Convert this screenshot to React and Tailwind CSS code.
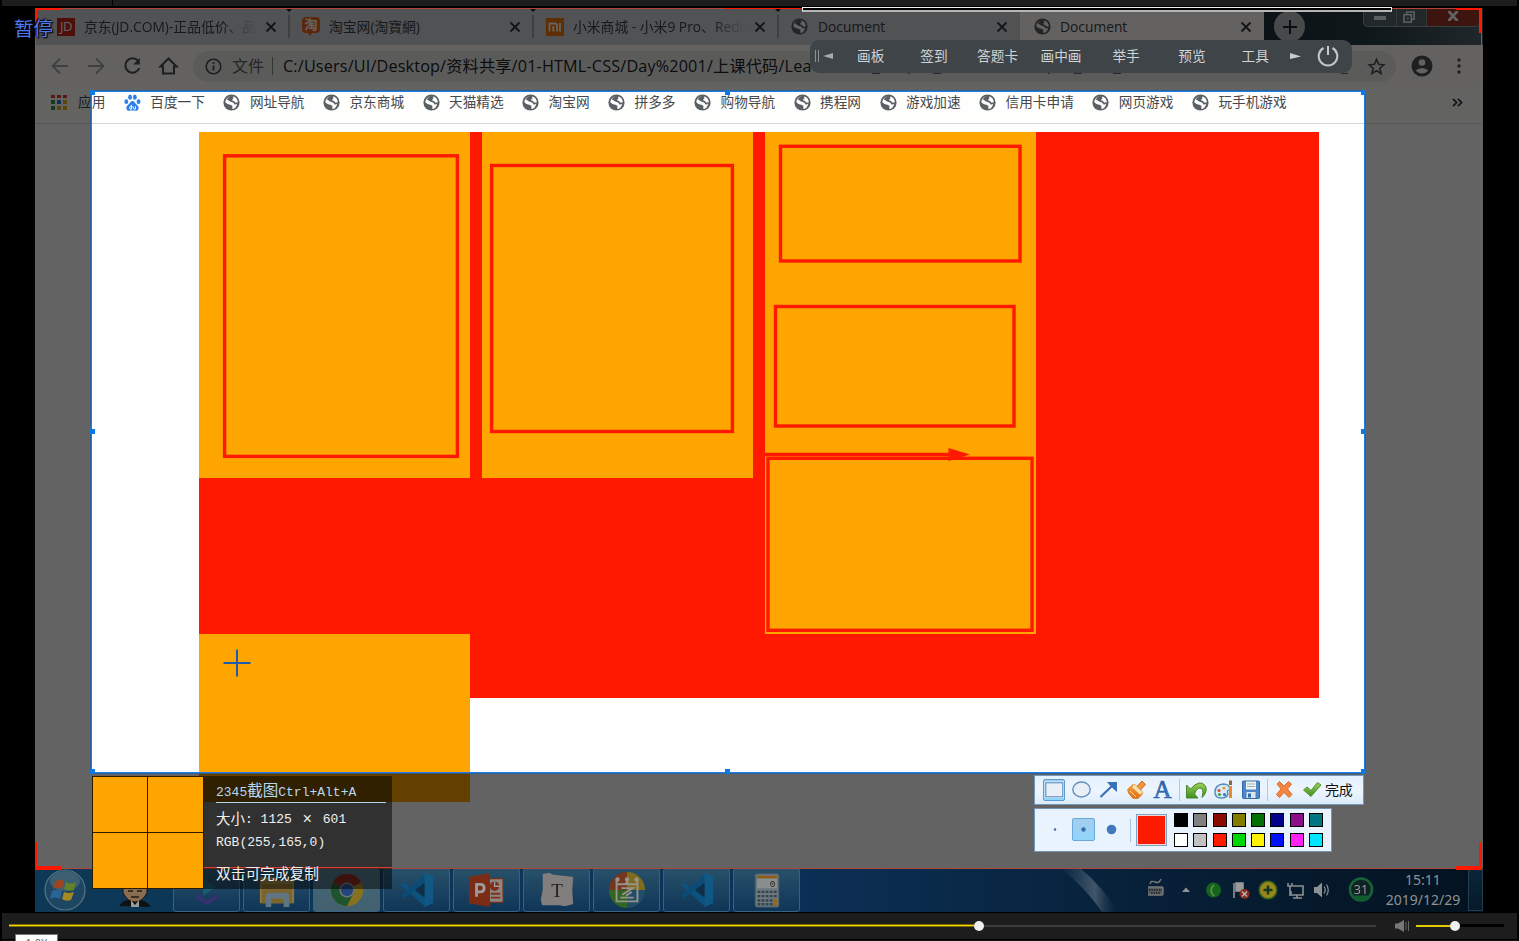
import React from "react";

const UI = "font-['Open_Sans','Noto_Sans_CJK_SC',sans-serif]";

function Globe({ className = "" }) {
  return (
    <svg viewBox="0 0 17 17" className={"h-[17px] w-[17px] shrink-0 " + className}>
      <circle cx="8.5" cy="8.5" r="8.1" fill="#5a6063" />
      <path d="M8 2.2C10.5 2 11 3.4 9.2 4.3C7.6 5 7.8 6.3 9.3 6.6C11.4 7 11.6 8.4 13 8.2C14.4 8 14.8 7.6 15 8.6C14.9 11.6 12.6 14.6 9.8 15C8.6 14.8 9.9 12.7 9.2 11.6C8.3 10.6 4.7 10.9 2.2 7.9C2.7 4.7 5.2 2.5 8 2.2Z" fill="#fefefe" />
      <path d="M3.8 5.7C5.6 5.9 6.1 7 7.8 7.8C10.4 8.5 11.2 9.4 11.5 10.6C13.2 10.6 13.8 9.8 14.4 9.4C13.9 12 12.2 14 10.5 14.6L15 12L15.6 6.5L12 2.5L8.6 1.8C6 2 5 3.6 3.8 5.7Z" fill="#5a6063" />
      <path d="M9.6 3.2C11.8 4.2 9.3 5.1 9 5.9C9.2 6.6 11.7 6.6 11.8 8.2C13 9 14 8 14.9 8.3C14.6 6 13.5 3.6 10.6 2.6Z" fill="#fefefe" />
    </svg>
  );
}

function Close() {
  return (
    <svg viewBox="0 0 12 12" className="h-3 w-3 shrink-0">
      <path d="M1.5 1.5L10.5 10.5M10.5 1.5L1.5 10.5" stroke="#33363a" strokeWidth="1.9" />
    </svg>
  );
}

function Tab({ icon, title, width, active, fade, sep }) {
  return (
    <div className={"relative flex h-full items-center pl-[13px] pr-3 " + width + (active ? " bg-[#fefdf8]" : "")}>
      <div className="flex w-[18px] shrink-0">{icon}</div>
      <div className={"ml-[9px] flex-1 overflow-hidden whitespace-nowrap text-[13.8px] leading-5 text-[#3c4043] " + (fade ? "mask-r-from-80%" : "")}>{title}</div>
      <div className="ml-2"><Close /></div>
      {sep && (
        <svg viewBox="0 0 8 38" className="absolute -right-1 top-0 z-10 h-[38px] w-2">
          <path d="M0 0H8L4 4Z" fill="#1b2226" />
          <path d="M4 7V30" stroke="#6e7478" />
        </svg>
      )}
    </div>
  );
}

function Baidu() {
  return (
    <svg viewBox="0 0 16 16" className="h-[17px] w-[17px] shrink-0" fill="#2f7fe8">
      <ellipse cx="2.2" cy="7.2" rx="1.8" ry="2.3" />
      <ellipse cx="5.7" cy="3" rx="1.8" ry="2.5" />
      <ellipse cx="10.2" cy="3" rx="1.8" ry="2.5" />
      <ellipse cx="13.7" cy="7.2" rx="1.8" ry="2.3" />
      <path d="M8 6.5C10 6.5 10.5 9 12.5 10.5C15 12.5 13.5 16 11 15.7C9 15.4 7 15.4 5 15.7C2.5 16 1 12.5 3.5 10.5C5.5 9 6 6.5 8 6.5Z" />
      <path d="M7 10.2V14.3H5.8Q4.7 13 5.8 11.8H7M8.6 11.6V13.6Q9 14.4 10.8 14.2V11.6" fill="none" stroke="#fff" strokeWidth=".9" />
    </svg>
  );
}

const appColors = ["bg-[#d8402f]", "bg-[#d8402f]", "bg-[#d8402f]", "bg-[#2f9a50]", "bg-[#3474e0]", "bg-[#e5b020]", "bg-[#2f9a50]", "bg-[#e5b020]", "bg-[#e5b020]"];
const bookmarks = ["网址导航", "京东商城", "天猫精选", "淘宝网", "拼多多", "购物导航", "携程网", "游戏加速", "信用卡申请", "网页游戏", "玩手机游戏"];

function TabStrip() {
  return (
    <div className="flex h-[37px] bg-[#cfd4d6]">
      <Tab sep fade width="ml-[9px] w-[245px]" title="京东(JD.COM)-正品低价、品质"
        icon={<span className="flex h-[18px] w-[18px] items-center justify-center bg-[#c8271d] text-[13px] tracking-[-0.5px] text-white">JD</span>} />
      <Tab sep width="w-[244px]" title="淘宝网(淘寶網)"
        icon={
          <span className="relative mb-[3px] flex h-[16px] w-[18px] items-center justify-center rounded-[4px] bg-[#f0641e] text-[13px] font-bold text-white">
            淘
            <span className="absolute -bottom-[3px] left-[5px] border-x-[3px] border-t-[4px] border-x-transparent border-t-[#f0641e]" />
          </span>
        } />
      <Tab sep fade width="w-[245px]" title="小米商城 - 小米9 Pro、Redmi"
        icon={
          <svg viewBox="0 0 18 18" className="h-[18px] w-[18px]">
            <rect width="18" height="18" fill="#f47a08" />
            <path d="M3.5 13.5V5.5H9Q11 5.5 11 7.5V13.5M7.3 8V13.5M14 5V13.5" fill="none" stroke="#fff" strokeWidth="1.8" />
          </svg>
        } />
      <Tab width="w-[242px]" title="Document" icon={<Globe />} />
      <Tab active width="w-[244px]" title="Document" icon={<Globe className="ml-px" />} />
      <div className="flex flex-1 items-start justify-between bg-linear-to-r from-[#1c3038] via-[#283e48] to-[#52666e]">
        <div className="ml-[10px] mt-[3px] flex h-[31px] w-[31px] items-center justify-center rounded-full bg-[#b8bdbf]">
          <svg viewBox="0 0 14 14" className="h-[14px] w-[14px]"><path d="M7 0V14M0 7H14" stroke="#1d2226" strokeWidth="2" /></svg>
        </div>
        <div className="mr-[3px] flex h-[19px] w-[117px] overflow-hidden rounded-b-[5px] border border-t-0 border-[#9aa2a6] bg-[#59666c]">
          <div className="flex w-[33px] items-center justify-center border-r border-[#8a9094]"><span className="mt-0.5 h-[4px] w-[12px] bg-[#f0f2f2]" /></div>
          <div className="flex w-[30px] items-center justify-center border-r border-[#8a9094]">
            <svg viewBox="0 0 13 13" className="-ml-1.5 h-[12px] w-[12px]" fill="none" stroke="#f0f2f2" strokeWidth="1.7"><rect x="1" y="4" width="8" height="8" /><path d="M4 4V1H12V9H9M4.5 8H6" /></svg>
          </div>
          <div className="flex flex-1 items-center justify-center bg-[#9c3826]">
            <svg viewBox="0 0 12 10" className="-mt-0.5 h-[10px] w-[12px]"><path d="M1.5 0L10.5 10M10.5 0L1.5 10" stroke="#fafafa" strokeWidth="2.8" /></svg>
          </div>
        </div>
      </div>
    </div>
  );
}

function AddressBar() {
  return (
    <div className="flex h-[42px] items-center bg-[#fefdf8] pl-[15px]">
      <svg viewBox="0 0 130 24" className="h-6 w-[130px] shrink-0" fill="none" stroke="#4c5054" strokeWidth="2.1">
        <g stroke="#a2a4a4" strokeWidth="1.8"><path d="M18 12H3M10 4.500L2.500 12L10 19.500" /><path d="M38 12H53M46 4.500L53.500 12L46 19.500" /></g>
        <path d="M88 6.800A7.200 7.200 0 1 0 89.300 14" />
        <path d="M89.800 4V10.500H83.200Z" fill="#4c5054" stroke="none" />
        <path d="M113 19.500V12.500H110.500L118.500 4.500L126.500 12.500H124V19.500Z" />
      </svg>
      <div className="ml-[13px] flex h-[31px] w-[1203px] items-center rounded-full bg-[#ebede8] pl-[12px] pr-[10px]">
        <svg viewBox="0 0 17 17" className="h-[17px] w-[17px] shrink-0" fill="none" stroke="#4c5054" strokeWidth="1.6"><circle cx="8.500" cy="8.500" r="7.300" /><path d="M8.500 7.500V12.500M8.500 4.300V6" strokeWidth="1.900" /></svg>
        <span className="ml-[10px] w-[32px] whitespace-nowrap text-[16px] leading-6 text-[#5f6368]">文件</span>
        <span className="ml-2 h-[18px] w-px bg-[#85898b]" />
        <span className="ml-[10px] flex-1 overflow-hidden whitespace-nowrap text-[16.2px] leading-6 tracking-[0.165px] text-[#202124]">C:/Users/UI/Desktop/资料共享/01-HTML-CSS/Day%2001/上课代码/Lea</span>
        <svg viewBox="0 0 24 24" className="h-[19px] w-[19px] shrink-0" fill="none" stroke="#4c5054" strokeWidth="2"><path d="M12 3L14.600 9.200L21.300 9.800L16.200 14.200L17.800 20.800L12 17.300L6.200 20.800L7.800 14.200L2.700 9.800L9.400 9.200Z" /></svg>
      </div>
      <svg viewBox="0 0 22 22" className="ml-[15px] h-[22px] w-[22px] shrink-0"><circle cx="11" cy="11" r="10.500" fill="#4c5054" /><circle cx="11" cy="7.500" r="3.300" fill="#fefdf8" /><path d="M4.500 15.500Q11 10.500 17.500 15.500Q11 21.500 4.500 15.500Z" fill="#fefdf8" /></svg>
      <svg viewBox="0 0 4 16" className="ml-[24px] h-4 w-1" fill="#4c5054"><circle cx="2" cy="2" r="1.700" /><circle cx="2" cy="8" r="1.700" /><circle cx="2" cy="14" r="1.700" /></svg>
    </div>
  );
}

function Bookmarks() {
  return (
    <div className="flex h-[37px] items-center gap-[18.5px] border-b border-[#d9dadb] bg-[#fefefd] pb-[6px] pl-[16px] text-[13.65px] leading-5 text-[#45494d]">
      <div className="flex items-center gap-[10px] whitespace-nowrap">
        <div className="grid h-[15px] w-[17px] grid-cols-3 gap-x-[2.500px] gap-y-[2px] pr-[1px]">{appColors.map((c, i) => <span key={i} className={c} />)}</div>应用
      </div>
      <div className="flex items-center gap-[9.500px] whitespace-nowrap"><Baidu />百度一下</div>
      {bookmarks.map((b) => <div key={b} className="flex items-center gap-[9.500px] whitespace-nowrap"><Globe />{b}</div>)}
      <svg viewBox="0 0 12 10" className="ml-auto mr-[20px] h-[9px] w-[11px]" fill="none" stroke="#303438" strokeWidth="1.900"><path d="M1 1L5 5L1 9M6.500 1L10.500 5L6.500 9" /></svg>
    </div>
  );
}

function PageContent() {
  return (
    <div className="flex-1 bg-[#fefefe] pl-[164px] pt-[8px]">
      <div className="flex h-[566px] w-[1120px] gap-[12px] bg-[#ff1900]">
        <div className="flex w-[271px] shrink-0 flex-col gap-[156px]">
          <div className="h-[346px] shrink-0 bg-[#ffa500]" />
          <div className="h-[168px] shrink-0 bg-[#ffa500]" />
        </div>
        <div className="h-[346px] w-[271px] shrink-0 bg-[#ffa500]" />
        <div className="h-[502px] w-[271px] shrink-0 bg-[#ffa500]" />
      </div>
    </div>
  );
}

function Annotations() {
  return (
    <svg viewBox="0 0 1272 680" className="absolute left-[57px] top-[84px] h-[680px] w-[1272px]" fill="none" stroke="#ff1900" strokeWidth="3.400">
      <g transform="translate(-92 -92)">
        <rect x="224.600" y="155.800" width="232.800" height="300.600" />
        <rect x="491.600" y="165.500" width="240.800" height="266" />
        <rect x="780.500" y="146.300" width="239.500" height="114.700" />
        <rect x="775.500" y="306.500" width="238.500" height="119.500" />
        <rect x="768" y="458.300" width="264" height="172" />
        <path d="M764 454.500H950" />
        <path d="M948.500 448L970 454.500L948.500 461Z" fill="#ff1900" stroke="none" />
        <path d="M237 649.500V676.500M223.500 663H250.500" stroke="#1f5bb0" strokeWidth="2" />
      </g>
    </svg>
  );
}

function Selection() {
  const h = "absolute h-[5px] w-[5px] bg-[#0a78e6] ";
  return (
    <div className="absolute left-[56px] top-[83px] h-[682px] w-[1274px] border-[1px] border-[#1f7fe6] shadow-[0_0_0_1px_rgba(30,95,170,0.75),0_0_0_2000px_rgba(0,0,0,0.61)]">
      <span className={h + "-left-[2px] -top-[2px]"} /><span className={h + "left-[633px] -top-[2px]"} /><span className={h + "-right-[2px] -top-[2px]"} />
      <span className={h + "-left-[2px] top-[337px]"} /><span className={h + "-right-[2px] top-[337px]"} />
      <span className={h + "-bottom-[2px] -left-[2px]"} /><span className={h + "-bottom-[2px] left-[633px]"} /><span className={h + "-bottom-[2px] -right-[2px]"} />
    </div>
  );
}

function VSCode() {
  return (
    <svg viewBox="0 0 40 40" className="h-[38px] w-[38px] opacity-85">
      <path d="M3 15L6 12L32 31L29 38Z" fill="#1283cc" /><path d="M3 26L6 29L32 10L29 2Z" fill="#0e76bd" /><path d="M28 2L37 6V34L28 38V28L18 20L28 12Z" fill="#168fd8" /><path d="M28 12V28L18 20Z" fill="#134466" />
    </svg>
  );
}

const taskIcons = [
  <svg viewBox="0 0 40 40" className="h-[38px] w-[38px]"><path d="M16 8L29 17L16 26Z" fill="#2a8fae" /><path d="M9 24L20 32L31 24V29L20 36L9 29Z" fill="#5a49ac" /></svg>,
  <svg viewBox="0 0 40 40" className="h-[38px] w-[38px]"><path d="M2 6H17L20 10H38V34H2Z" fill="#d6b75c" /><path d="M4 14H36V34H4Z" fill="#bf9a46" /><path d="M8 38V27Q8 23 12 23H29Q33 23 33 27V38H27V29H14V38Z" fill="#93b4c8" /></svg>,
  <svg viewBox="0 0 40 40" className="h-[38px] w-[38px]"><circle cx="20" cy="20" r="17" fill="#cfae30" /><path d="M20 20L5 12A17 17 0 0 1 35 12Z" fill="#b9392e" /><path d="M5 12A17 17 0 0 0 20 37L27 23Z" fill="#2f8045" /><circle cx="20" cy="20" r="8" fill="#a9b4b8" /><circle cx="20" cy="20" r="6.400" fill="#3569bf" /></svg>,
  <VSCode />,
  <svg viewBox="0 0 40 40" className="h-[38px] w-[38px]"><path d="M22 8H37V33H22Z" fill="#d8d0cc" stroke="#b84428" strokeWidth="1.500" /><circle cx="28" cy="16" r="5" fill="#c84826" /><path d="M28 11V16H34" stroke="#eee" fill="none" strokeWidth="1.500" /><path d="M24 24H34M24 28H34" stroke="#c84826" strokeWidth="2" /><path d="M1 6L23 2V38L1 34Z" fill="#bf4221" /><path d="M9 27V14H13Q17 14 17 18Q17 22 13 22H9" fill="none" stroke="#eee" strokeWidth="3" /></svg>,
  <svg viewBox="0 0 40 40" className="h-[38px] w-[38px]"><path d="M6 4L12 3L16 5L36 7L35 20L36 34L29 36L22 35L5 35L4 30L6 20Z" fill="#c6c3c1" stroke="#c6c3c1" strokeWidth="2" strokeLinejoin="round" /><text x="20" y="27" textAnchor="middle" fontFamily="Liberation Serif, serif" fontSize="20" fill="#333">T</text></svg>,
  <svg viewBox="0 0 40 40" className="h-[38px] w-[38px]"><path d="M20 20V1A19 19 0 0 0 1 20Z" fill="#b4532c" /><path d="M20 20V1A19 19 0 0 1 39 20Z" fill="#c9a52b" /><path d="M20 20H39A19 19 0 0 1 20 39Z" fill="#31769f" /><path d="M20 20H1A19 19 0 0 0 20 39Z" fill="#4d9c35" /><g fill="none" stroke="#e4e4d8" strokeWidth="2"><path d="M9 9V32H31V9M9 14H31" /><path d="M14 18H26L15 25M25 22L19 26M13 28H27" /></g><g fill="#e4e4d8"><circle cx="10" cy="9" r="2.300" /><circle cx="20" cy="9" r="2.300" /><circle cx="30" cy="9" r="2.300" /><path d="M17 14L20 10L23 14Z" /></g></svg>,
  <VSCode />,
  <svg viewBox="0 0 40 40" className="h-[38px] w-[38px]"><rect x="7.500" y="3" width="25" height="35" rx="2" fill="#a9bac4" stroke="#6d8797" /><rect x="9.500" y="5" width="21" height="3" fill="#d98f25" /><rect x="9.500" y="8" width="21" height="10" fill="#d5dadb" /><text x="23" y="17" fontSize="10" fontFamily="Liberation Mono, monospace" fill="#333">0</text><path d="M10 22H31M10 26.500H31M10 31H31M10 35H31" stroke="#50697a" strokeWidth="2.500" strokeDasharray="3 1.300" /><rect x="27" y="29.500" width="3.500" height="7" fill="#dda135" /></svg>,
];

function Taskbar() {
  return (
    <div className="absolute left-0 top-[860px] flex h-[44px] w-full items-center overflow-hidden bg-linear-to-r from-[#0d3856] via-[#0c3259] to-[#04121f]">
      <svg viewBox="0 0 138 44" className="h-11 w-[138px] shrink-0 brightness-[.7]">
        <circle cx="30" cy="22" r="20" fill="#28648c" stroke="#7ea6bb" strokeWidth="1.200" />
        <ellipse cx="30" cy="13" rx="15" ry="10" fill="#7fa2b5" opacity=".55" />
        <path d="M20 14Q25 10 29 13L27 21Q23 18 18 21Z" fill="#e0622c" /><path d="M31 14Q36 17 41 14L39 22Q34 24 29 21Z" fill="#8cb83a" />
        <path d="M17 23Q22 20 27 23L25 31Q20 28 15 31Z" fill="#3c8fd4" /><path d="M29 24Q34 26 39 24L36 32Q31 34 27 31Z" fill="#ecc334" />
        <g transform="translate(6 0)"><path d="M78 38Q82 32 88 32H99Q105 32 110 39Z" fill="#15171a" /><path d="M82 14H106V25Q101 34 94 34Q87 34 82 25Z" fill="#c49c74" stroke="#241a14" /><path d="M90 32L94 37L98 32V39H90Z" fill="#ddd" /><path d="M87 23H92M96 23H101M90 29H98" stroke="#33251a" strokeWidth="1.300" /></g>
      </svg>
      <div className="flex gap-[3px]">
        {taskIcons.map((icon, i) => (
          <div key={i} className={"flex h-[44px] w-[67px] items-center justify-center rounded-[3px] border border-[#38627f] " + (i === 2 ? "bg-linear-to-b from-[#476877] to-[#42606f]" : "bg-linear-to-b from-[#28516a] to-[#0f3557]")}>
            <div className="brightness-[.65]">{icon}</div>
          </div>
        ))}
      </div>
      <svg viewBox="0 0 90 44" className="ml-[258px] h-11 w-[90px] shrink-0">
        <defs><linearGradient id="streak"><stop offset="0" stopColor="#375066" stopOpacity="0" /><stop offset=".6" stopColor="#41566a" /><stop offset="1" stopColor="#1c3143" stopOpacity="0" /></linearGradient></defs>
        <path d="M2 0H22Q46 20 60 44H44Q26 18 2 0Z" fill="url(#streak)" />
      </svg>
      <svg viewBox="0 0 240 44" className="h-11 w-[240px] shrink-0 brightness-[.72]">
        <g fill="none" stroke="#a3a5a6" strokeWidth="1.400"><rect x="-1" y="19" width="16" height="8" rx="1" fill="#7e8284" /><path d="M2 16Q3 12 7 14T13 11" /><path d="M1 22H14M3 25H12" stroke="#20282e" strokeDasharray="1.500 1" /></g>
        <path d="M34 24L38 19.500L42 24Z" fill="#c8ccce" />
        <circle cx="65.500" cy="22" r="7.500" fill="#1d8a28" /><path d="M66 17Q60 22 66 28" stroke="#75c455" strokeWidth="2" fill="none" />
        <path d="M86 15V30M88 15H95V23H88Z" fill="#d6d6d6" stroke="#d6d6d6" strokeWidth="1.500" /><circle cx="96.500" cy="26" r="5" fill="#bd3b2d" /><path d="M94 23.500L99 28.500M99 23.500L94 28.500" stroke="#fff" strokeWidth="1.400" />
        <circle cx="120" cy="22" r="8.700" fill="#d6bc26" stroke="#4c8c2d" strokeWidth="1.500" /><path d="M120 17.500V26.500M115.500 22H124.500" stroke="#1d4c28" strokeWidth="2.500" />
        <g fill="none" stroke="#c2c8cb" strokeWidth="1.600"><path d="M145 18H155V27H143V23M149 30V27M145 30H154" /><path d="M140 15V18H144V15M142 18V28" /></g>
        <path d="M166 19H169L174 14.500V29.500L169 25H166Z" fill="#c5cacd" /><path d="M176 18.500Q178.500 22 176 25.500M178.500 16.500Q182 22 178.500 27.500" fill="none" stroke="#c5cacd" strokeWidth="1.200" />
        <circle cx="213" cy="21.500" r="11" fill="#153035" stroke="#23894e" strokeWidth="2.500" /><path d="M203.500 27.500H222.500Q219 33 213 33Q207 33 203.500 27.500Z" fill="#158044" /><text x="213" y="26" textAnchor="middle" fill="#d8dcdc" fontFamily="Open Sans, sans-serif" fontSize="12.500">31</text>
      </svg>
      <div className="absolute right-[17px] top-[2px] w-[86px] text-center font-['Noto_Sans',sans-serif] text-[14px] leading-[20px] text-[#8f9294]">15:11<br />2019/12/29</div>
      <div className="absolute right-0 top-0 h-[43px] w-[15px] border border-[#253f50] bg-linear-to-b from-[#0a2737] to-[#06192a]" />
    </div>
  );
}

function RecordingFrame() {
  const c = "absolute bg-[#ff1800] ";
  return (
    <div className="absolute left-0 top-0 h-[861px] w-[1447px] border border-[#b3443b]">
      <span className={c + "-left-px -top-px h-[2px] w-[26px]"} /><span className={c + "-left-px -top-px h-[28px] w-[2px]"} />
      <span className={c + "-right-px -top-px h-[2px] w-[26px]"} /><span className={c + "-right-px -top-px h-[25px] w-[3px]"} />
      <span className={c + "-left-px -bottom-[2px] h-[4px] w-[26px]"} /><span className={c + "-left-px -bottom-[2px] h-[28px] w-[2px]"} />
      <span className={c + "-right-px -bottom-[2px] h-[4px] w-[26px]"} /><span className={c + "-right-px -bottom-[2px] h-[28px] w-[3px]"} />
      <span className={c + "-top-px left-[688px] h-px w-[78px]"} />
    </div>
  );
}

const classTools = [["画板", "ml-[24px]"], ["签到", "ml-[36px]"], ["答题卡", "ml-[29.500px]"], ["画中画", "ml-[22.500px]"], ["举手", "ml-[31px]"], ["预览", "ml-[38.500px]"], ["工具", "ml-[36px]"]];

function ClassToolbar() {
  return (
    <div className="absolute left-[775px] top-[32px]">
      <div className="flex h-[33px] w-[542px] items-center rounded-[9px] bg-[#3f4448] pb-px pl-[5px] text-[13.650px] leading-5 text-[#d0d4d6]">
        <svg viewBox="0 0 18 12" className="h-3 w-[18px]"><path d="M.500 0V12M3.500 0V12" stroke="#8d9194" /><path d="M8 6L18 3V9Z" fill="#a5a9ac" /></svg>
        {classTools.map(([t, m]) => <span key={t} className={"whitespace-nowrap " + m}>{t}</span>)}
        <svg viewBox="0 0 11 6" className="ml-[21px] h-1.5 w-[11px]"><path d="M0 0L11 3.500L0 6Z" fill="#c8cccf" /></svg>
        <svg viewBox="0 0 22 22" className="ml-[16px] h-[22px] w-[22px]" fill="none" stroke="#c2c6c9" strokeWidth="2.100"><path d="M11 1V10M6.500 3A9.300 9.300 0 1 0 15.500 3" /></svg>
      </div>
      <svg viewBox="0 0 542 2" className="-mt-[0.5px] h-0.5 w-[542px]"><path d="M62 .5H70M98 .5H100M123 .5H131M238 .5H240M264 .5H272M303 .5H311M531 .5H538" stroke="#26282a" /></svg>
    </div>
  );
}

const swatches = ["bg-black", "bg-[#808080]", "bg-[#8b0a00]", "bg-[#827c00]", "bg-[#007000]", "bg-[#00008a]", "bg-[#8a0f88]", "bg-[#007582]", "bg-white", "bg-[#c0c0c0]", "bg-[#ff1a00]", "bg-[#00d600]", "bg-[#fff200]", "bg-[#0010ff]", "bg-[#ff20f5]", "bg-[#00e5ff]"];

function SnipTools() {
  return (
    <div className="absolute left-[999px] top-[767px] flex flex-col items-start gap-[3px]">
      <div className="flex h-[30px] w-[330px] items-center border border-[#7396ba] bg-linear-to-b from-[#e3f1fd] via-[#edf5fe] to-[#dcecfb]">
        <svg viewBox="0 0 290 28" className="h-7 w-[290px] shrink-0" fill="none">
          <defs>
            <linearGradient id="sel" x2="0" y2="1"><stop stopColor="#a5cdee" /><stop offset="1" stopColor="#8fd5fa" /></linearGradient>
            <linearGradient id="grn" x2="0" y2="1"><stop stopColor="#9bd34e" /><stop offset="1" stopColor="#3d8e22" /></linearGradient>
            <linearGradient id="org" x2="0" y2="1"><stop stopColor="#f7a13c" /><stop offset="1" stopColor="#e06c14" /></linearGradient>
            <linearGradient id="blu" x2="0" y2="1"><stop stopColor="#26548f" /><stop offset="1" stopColor="#4485d6" /></linearGradient>
          </defs>
          <rect x="8.500" y="3.500" width="21" height="21" rx="1.500" fill="url(#sel)" stroke="#5b9ccd" />
          <rect x="10.800" y="6.800" width="17" height="14" fill="#e9eff6" stroke="#f8fbff" strokeWidth="2.400" />
          <rect x="10.800" y="6.800" width="17" height="14" stroke="#5c8dc0" strokeWidth="1.200" />
          <ellipse cx="46.500" cy="13.500" rx="8.700" ry="7.500" fill="#e8eff7" stroke="#638fbd" strokeWidth="1.400" />
          <path d="M65.500 21L78 9" stroke="#3973b4" strokeWidth="2.200" /><path d="M72 6H82V16L79 13.500L74.500 9Z" fill="#3973b4" />
          <path d="M107 5L110.500 8.500L105 14.500L101.500 11Z" fill="#f0953a" stroke="#ca6a14" />
          <path d="M98 8.500L107.500 18L103 22.500H98L93.500 17L92.500 13.500Z" fill="url(#org)" stroke="#d9771c" strokeWidth=".8" />
          <path d="M99.500 8L108 16.500L105 19L96.500 11Z" fill="#fbe0ad" stroke="#d98a34" strokeWidth=".7" /><path d="M95 15L101 21" stroke="#ffdca2" />
          <text x="127.500" y="21.500" textAnchor="middle" fontFamily="Liberation Serif, serif" fontSize="25" fill="url(#blu)" stroke="#2d63a8" strokeWidth=".7">A</text>
          <path d="M144.500 3V25M232.500 3V25" stroke="#a9cbe6" />
          <path d="M151.500 9V22H163L159.500 18Q162 10.500 167 12.500Q169 15 167 21.500Q173 16 170.500 10Q165 2.500 155.500 13Z" fill="url(#grn)" stroke="#48862b" />
          <path d="M180 16Q180 9 188 8Q195 8 195 14Q191 14 193 18Q192 22 186 22Q180 22 180 16Z" fill="#dcebf7" stroke="#568fbd" strokeWidth="1.500" /><circle cx="184" cy="14.500" r="1.600" fill="#d64d3c" /><circle cx="189" cy="12" r="1.600" fill="#d6a32a" /><circle cx="184.500" cy="18.500" r="1.600" fill="#48a340" /><circle cx="189.500" cy="18.500" r="1.600" fill="#3e73c6" />
          <path d="M195.500 22V10" stroke="#e88c2c" strokeWidth="3" /><path d="M195.500 9V4.500" stroke="#90653e" strokeWidth="3" />
          <rect x="207.500" y="5" width="17" height="17.500" rx="1" fill="#4c85c8" stroke="#346aa9" /><rect x="211" y="5.500" width="10" height="8" fill="#f2f4f2" /><path d="M212 8H220M212 10.500H220" stroke="#9aafba" /><rect x="211.500" y="16" width="9" height="6" fill="#dbe6ef" /><rect x="213" y="17.500" width="3" height="4" fill="#356aae" />
          <path d="M242 8L244.500 5.500L249 10L253.500 5.500L256.500 8L252.500 13L257 18.500L254 21.500L249 16.500L244.500 21.500L241.500 18.500L246 13Z" fill="#f58640" stroke="#d86d31" />
          <path d="M268.500 14L272 11L276 14.500L282.500 6.500L286 9L276 20.500Z" fill="url(#grn)" stroke="#549332" />
        </svg>
        <span className="whitespace-nowrap text-[14px] leading-5 tracking-[-0.3px] text-[#111]">完成</span>
      </div>
      <div className="flex h-[44px] w-[298px] items-center border border-[#7396ba] bg-[#e9f3fd]">
        <svg viewBox="0 0 102 42" className="h-[42px] w-[102px] shrink-0"><circle cx="20" cy="20.500" r="1.200" fill="#39679e" /><rect x="37.500" y="9.500" width="22" height="22" rx="1.500" fill="url(#sel)" stroke="#69aad8" /><circle cx="48.500" cy="20.500" r="2.200" fill="#346fac" /><circle cx="76.500" cy="20.500" r="4.800" fill="#4279be" /><path d="M95.500 10V33" stroke="#a3c6e3" /></svg>
        <span className="-ml-px h-[32px] w-[31px] shrink-0 border border-[#7da4c7] bg-[#fc1a00] ring-1 ring-inset ring-[#f7d5d0]" />
        <div className="ml-[7px] grid grid-cols-8 gap-x-[5.250px] gap-y-[5.500px]">
          {swatches.map((s) => <span key={s} className={"h-[14px] w-[14px] border border-black " + s} />)}
        </div>
      </div>
    </div>
  );
}

function InfoPanel() {
  const mono = "font-['Liberation_Mono','Noto_Sans_CJK_SC',monospace] text-[13px]";
  return (
    <div className="absolute left-[57px] top-[768px] flex h-[113px] w-[300px]">
      <div className="grid h-[113px] w-[112px] shrink-0 grid-cols-[54px_55px] grid-rows-2 gap-px border border-[#2b1a00] bg-[#2b1a00]">
        <span className="bg-[#ffa500]" /><span className="bg-[#ffa500]" /><span className="bg-[#ffa500]" /><span className="bg-[#ffa500]" />
      </div>
      <div className="relative flex-1 bg-black/50 pl-[12px] pr-[6px] pt-[6px] text-[#efefef]">
        <span className="absolute left-0 top-[91px] h-px w-full bg-[#d8412e]" />
        <div className={"h-[21px] whitespace-nowrap border-b border-[#b5d5ea] leading-[20px] text-[#b5d9f2] " + mono}>2345<span className="text-[15.500px]">截图</span>Ctrl+Alt+A</div>
        <div className={"mt-[6px] flex h-[22px] whitespace-pre leading-[22px] " + mono}><span className="text-[14.500px]">大小</span>: 1125<span className="mx-[7.5px] w-[16px] text-center text-[16px]">×</span>601</div>
        <div className={"h-[23px] leading-[24px] " + mono}>RGB(255,165,0)</div>
        <div className="relative mt-[9px] whitespace-nowrap text-[14.700px] leading-[20px]">双击可完成复制</div>
      </div>
    </div>
  );
}

function Player() {
  return (
    <div className="mx-[2px] flex h-[29px] flex-col overflow-hidden border-t border-black bg-[#1d1d1d]">
      <div className="flex h-[25px] items-center pl-[7px]">
        <span className="h-[3px] w-[965px] border-y border-[#7a6a00] bg-[#f2d900]" />
        <span className="h-[10px] w-[10px] rounded-full bg-[#efefef]" />
        <span className="h-[2px] w-[392px] bg-[#3d3d3d]" />
        <svg viewBox="0 0 15 12" className="ml-[19px] h-3 w-[15px]"><path d="M0 3.500H3L9 0V12L3 8.500H0Z" fill="#777" /><path d="M11 2V10M13.500 1V11" stroke="#666" /></svg>
        <span className="ml-[6px] h-[2px] w-[34px] bg-[#e3cb00]" />
        <span className="h-[10px] w-[10px] rounded-full bg-[#efefef]" />
        <span className="h-[3px] w-[44px] bg-black" />
      </div>
      <div className="mt-px h-[2px] border-t border-black bg-[#141414]" />
    </div>
  );
}

export default function App() {
  return (
    <div className={"relative h-[941px] w-[1519px] overflow-hidden bg-black " + UI}>
      <div className="mx-[2px] flex h-[6px] bg-[#1d1d1d]"><span className="ml-[110px] w-px bg-black" /></div>
      <div className="relative ml-[35px] mt-[2px] h-[904px] w-[1448px] overflow-hidden">
        <div className="isolate flex h-[860px] flex-col">
          <TabStrip />
          <AddressBar />
          <Bookmarks />
          <PageContent />
        </div>
        <Annotations />
        <Selection />
        <Taskbar />
        <RecordingFrame />
        <ClassToolbar />
        <SnipTools />
        <InfoPanel />
      </div>
      <Player />
      <div className="absolute left-[802px] top-[7px] h-[5px] w-[590px] border border-b-2 border-[#f0f0f0] border-b-[#b5b5b5] bg-black" />
      <div className="absolute left-[14px] top-[17px] whitespace-nowrap text-[19.500px] leading-6 text-[#5078ee] text-shadow-[0_0_2px_#000,1px_1px_1px_#000,-1px_-1px_1px_#000]">暂停</div>
      <div className="absolute left-[15px] top-[934px] h-[12px] w-[43px] overflow-hidden border border-[#777] bg-white text-center text-[11px] leading-[16px] text-[#555]">1.0X</div>
    </div>
  );
}
